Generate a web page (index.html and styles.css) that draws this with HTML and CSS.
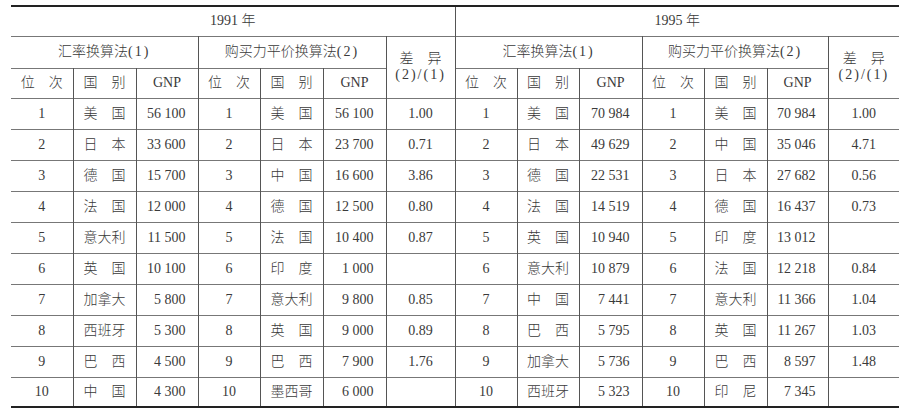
FILE: index.html
```html
<!DOCTYPE html>
<html lang="zh">
<head>
<meta charset="utf-8">
<title>GNP 排名</title>
<link rel="stylesheet" href="styles.css">
</head>
<body>
<table class="gnp">
  <colgroup>
    <col class="c62"><col class="c63"><col class="c62"><col class="c62"><col class="c63"><col class="c63"><col class="c69">
    <col class="c62"><col class="c62"><col class="c63"><col class="c62"><col class="c63"><col class="c61"><col class="c71">
  </colgroup>
  <thead>
    <tr class="h1">
      <th colspan="7" class="div">1991 年</th>
      <th colspan="7">1995 年</th>
    </tr>
    <tr class="h2">
      <th colspan="3" class="vr">汇率换算法<span class="p">(1)</span></th>
      <th colspan="3" class="vr">购买力平价换算法<span class="p">(2)</span></th>
      <th rowspan="2" class="div diff">差　异<br><span class="p">(2)/(1)</span></th>
      <th colspan="3" class="vr">汇率换算法<span class="p">(1)</span></th>
      <th colspan="3" class="vr">购买力平价换算法<span class="p">(2)</span></th>
      <th rowspan="2" class="diff">差　异<br><span class="p">(2)/(1)</span></th>
    </tr>
    <tr class="h3">
      <th class="vr">位　次</th><th class="vr">国　别</th><th class="vr">GNP</th>
      <th class="vr">位　次</th><th class="vr">国　别</th><th class="vr">GNP</th>
      <th class="vr">位　次</th><th class="vr">国　别</th><th class="vr">GNP</th>
      <th class="vr">位　次</th><th class="vr">国　别</th><th class="vr">GNP</th>
    </tr>
  </thead>
  <tbody>
    <tr><td>1</td><td>美　国</td><td class="n">56 100</td><td>1</td><td>美　国</td><td class="n">56 100</td><td class="d div">1.00</td><td>1</td><td>美　国</td><td class="n">70 984</td><td>1</td><td>美　国</td><td class="n">70 984</td><td class="d">1.00</td></tr>
    <tr><td>2</td><td>日　本</td><td class="n">33 600</td><td>2</td><td>日　本</td><td class="n">23 700</td><td class="d div">0.71</td><td>2</td><td>日　本</td><td class="n">49 629</td><td>2</td><td>中　国</td><td class="n">35 046</td><td class="d">4.71</td></tr>
    <tr><td>3</td><td>德　国</td><td class="n">15 700</td><td>3</td><td>中　国</td><td class="n">16 600</td><td class="d div">3.86</td><td>3</td><td>德　国</td><td class="n">22 531</td><td>3</td><td>日　本</td><td class="n">27 682</td><td class="d">0.56</td></tr>
    <tr><td>4</td><td>法　国</td><td class="n">12 000</td><td>4</td><td>德　国</td><td class="n">12 500</td><td class="d div">0.80</td><td>4</td><td>法　国</td><td class="n">14 519</td><td>4</td><td>德　国</td><td class="n">16 437</td><td class="d">0.73</td></tr>
    <tr><td>5</td><td>意大利</td><td class="n">11 500</td><td>5</td><td>法　国</td><td class="n">10 400</td><td class="d div">0.87</td><td>5</td><td>英　国</td><td class="n">10 940</td><td>5</td><td>印　度</td><td class="n">13 012</td><td class="d"></td></tr>
    <tr><td>6</td><td>英　国</td><td class="n">10 100</td><td>6</td><td>印　度</td><td class="n">1 000</td><td class="d div"></td><td>6</td><td>意大利</td><td class="n">10 879</td><td>6</td><td>法　国</td><td class="n">12 218</td><td class="d">0.84</td></tr>
    <tr><td>7</td><td>加拿大</td><td class="n">5 800</td><td>7</td><td>意大利</td><td class="n">9 800</td><td class="d div">0.85</td><td>7</td><td>中　国</td><td class="n">7 441</td><td>7</td><td>意大利</td><td class="n">11 366</td><td class="d">1.04</td></tr>
    <tr><td>8</td><td>西班牙</td><td class="n">5 300</td><td>8</td><td>英　国</td><td class="n">9 000</td><td class="d div">0.89</td><td>8</td><td>巴　西</td><td class="n">5 795</td><td>8</td><td>英　国</td><td class="n">11 267</td><td class="d">1.03</td></tr>
    <tr><td>9</td><td>巴　西</td><td class="n">4 500</td><td>9</td><td>巴　西</td><td class="n">7 900</td><td class="d div">1.76</td><td>9</td><td>加拿大</td><td class="n">5 736</td><td>9</td><td>巴　西</td><td class="n">8 597</td><td class="d">1.48</td></tr>
    <tr class="last"><td>10</td><td>中　国</td><td class="n">4 300</td><td>10</td><td>墨西哥</td><td class="n">6 000</td><td class="d div"></td><td>10</td><td>西班牙</td><td class="n">5 323</td><td>10</td><td>印　尼</td><td class="n">7 345</td><td class="d"></td></tr>
  </tbody>
</table>
</body>
</html>
```

FILE: styles.css
```css
html, body {
  margin: 0;
  padding: 0;
  background: #ffffff;
}

body {
  padding: 5px 0 0 11px;
}

.gnp {
  border-collapse: collapse;
  table-layout: fixed;
  width: 888px;
  font-family: "Liberation Serif", "Noto Sans CJK SC", serif;
  font-size: 14px;
  font-weight: 300;
  color: #3a3a3a;
  border-top: 2px solid #222;
  border-bottom: 2px solid #222;
}

.c61 { width: 61px; }
.c62 { width: 62px; }
.c63 { width: 63px; }
.c69 { width: 69px; }
.c71 { width: 71px; }

.gnp th,
.gnp td {
  padding: 0;
  text-align: center;
  vertical-align: middle;
  border-top: 1px solid #777;
  white-space: nowrap;
  font-weight: 300;
  line-height: 16px;
}

.gnp td {
  border-right: 1px solid #555;
}

.gnp td.d:last-child {
  border-right: none;
}

.gnp th.vr {
  border-right: 1px solid #555;
}

.gnp .div {
  border-right: 1px solid #555;
}

.h1 { height: 30px; }
.h2 { height: 32px; }
.h3 { height: 30px; }
.gnp tbody tr { height: 31px; }
.gnp tbody tr.last { height: 30px; }

.gnp td.n {
  text-align: right;
  padding-right: 12px;
}

.p {
  letter-spacing: 2px;
}

.diff {
  padding-top: 2px;
}
```
